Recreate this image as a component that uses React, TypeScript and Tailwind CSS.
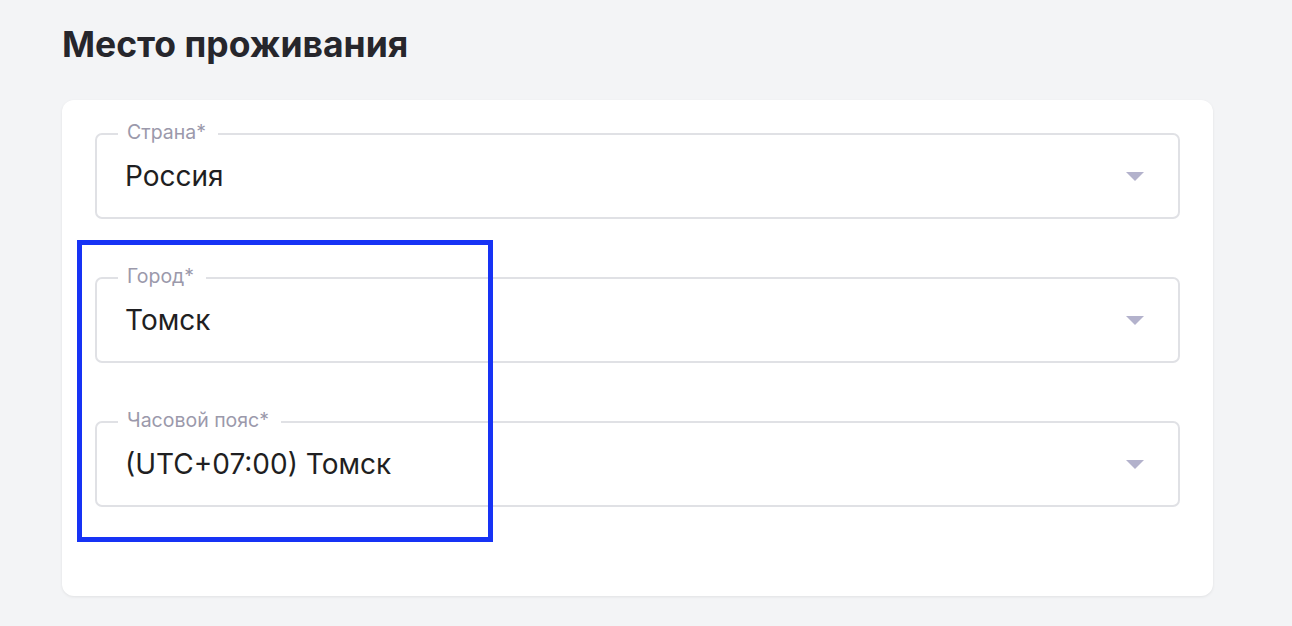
const fields = [
  { label: 'Страна*', value: 'Россия' },
  { label: 'Город*', value: 'Томск' },
  { label: 'Часовой пояс*', value: '(UTC+07:00) Томск' },
];

function SelectField({ label, value }: { label: string; value: string }) {
  return (
    <div className="relative flex h-[86px] items-center justify-between rounded-[7px] border-2 border-[#e0e1e5] pl-[28px] pr-[34px]">
      <span className="absolute -top-[15px] left-[21px] bg-white pl-[9px] pr-[12px] text-[19.5px] leading-[24px] text-[#9b99ab]">
        {label}
      </span>
      <span className="text-[28px] leading-none text-[#1f1f22]">{value}</span>
      <svg width="18" height="9" viewBox="0 0 18 9" className="shrink-0">
        <path d="M0 0 L18 0 L9 9 Z" fill="#b3b2cc" />
      </svg>
    </div>
  );
}

export default function App() {
  return (
    <div
      className="min-h-screen bg-[#f3f4f6] px-[62px] pt-[23px]"
      style={{ fontFamily: 'Inter, "Noto Sans", sans-serif' }}
    >
      <h1 className="text-[35.5px] font-bold leading-[44px] text-[#26262c]">
        Место проживания
      </h1>

      <div className="relative mt-[33px] w-[1151px] rounded-[12px] bg-white px-[33px] pb-[89px] pt-[33px] shadow-[0_1px_3px_rgba(0,0,0,0.08)]">
        <div className="flex flex-col gap-[58px]">
          {fields.map((f) => (
            <SelectField key={f.label} label={f.label} value={f.value} />
          ))}
        </div>

        {/* highlight annotation */}
        <div className="pointer-events-none absolute left-[15px] top-[140px] h-[302px] w-[416px] border-[5px] border-[#1733f5]" />
      </div>
    </div>
  );
}
